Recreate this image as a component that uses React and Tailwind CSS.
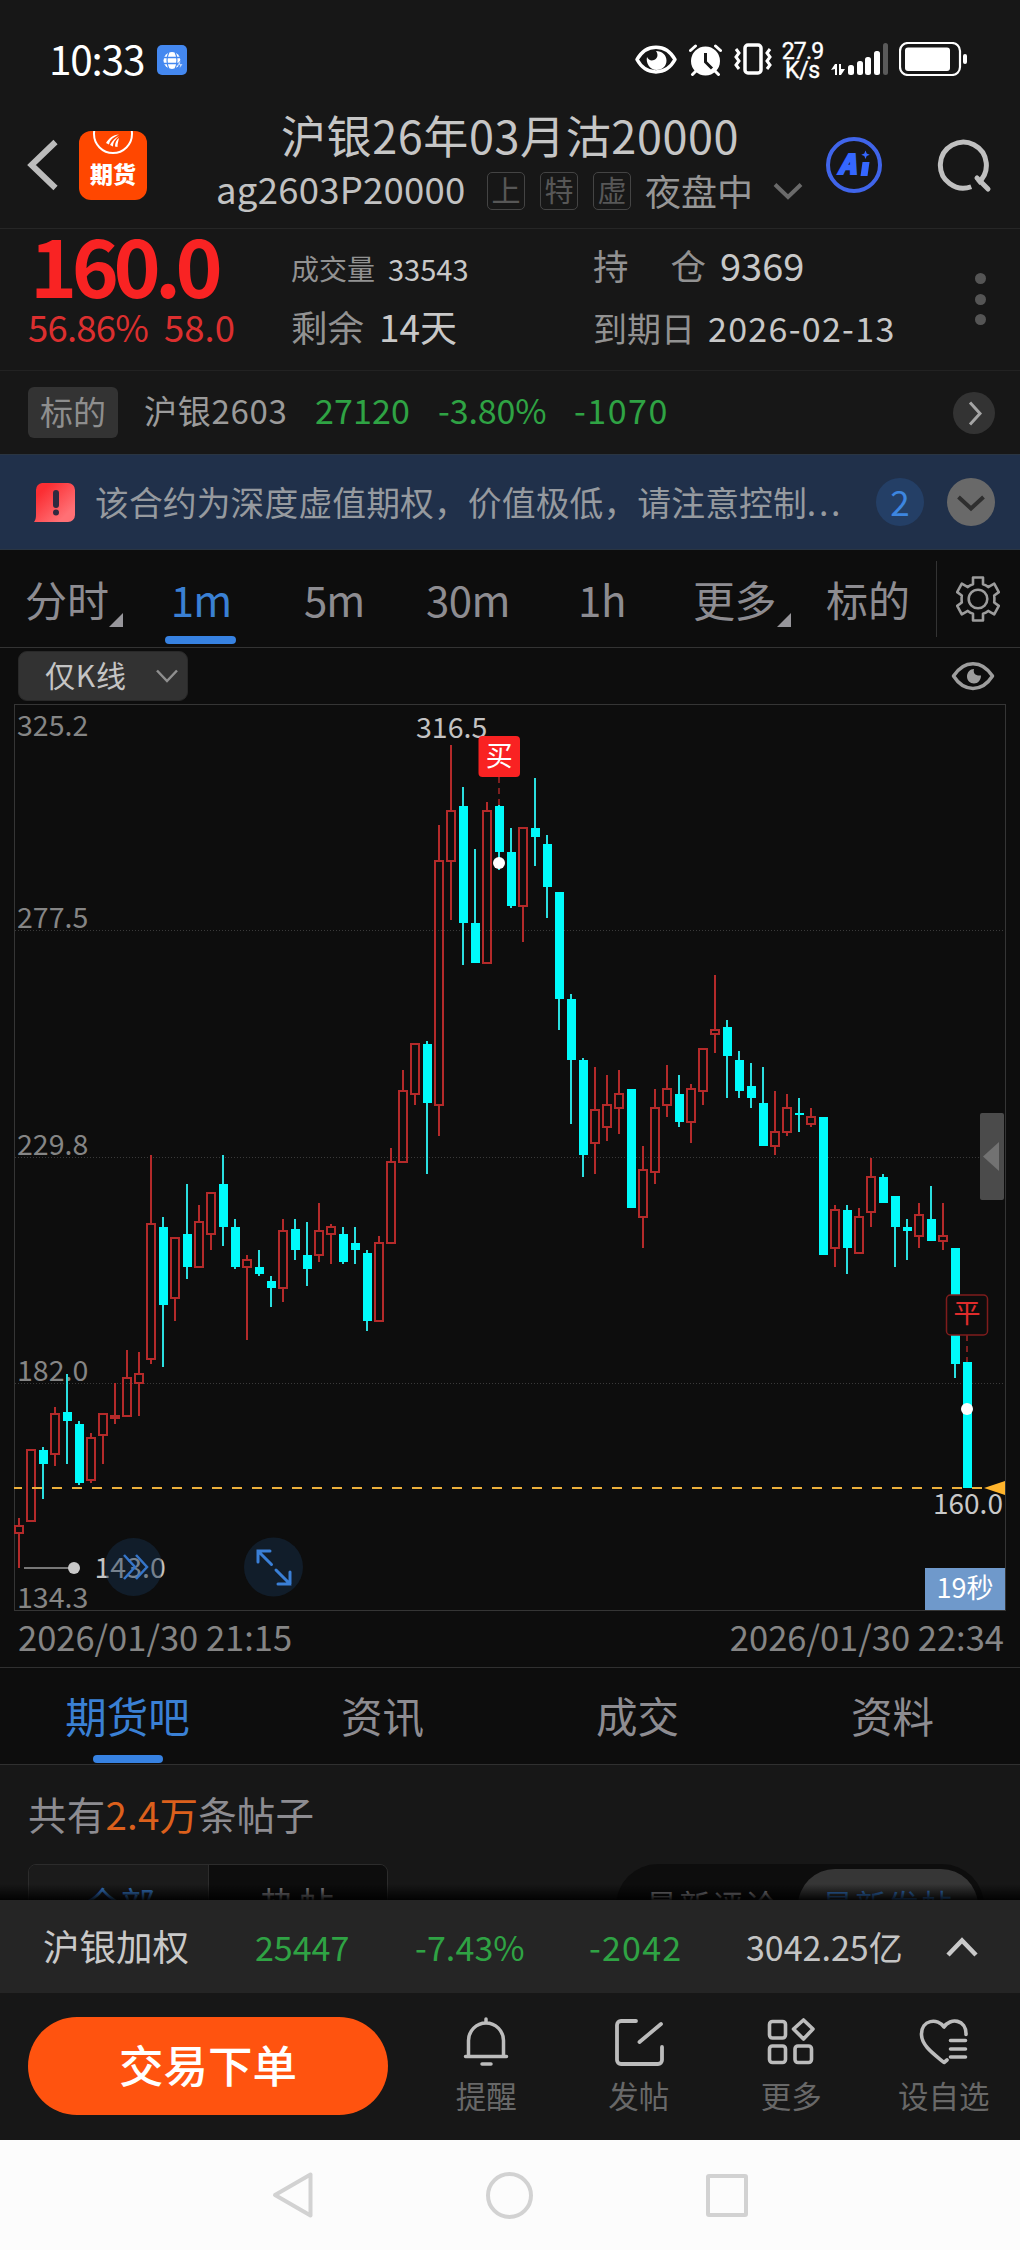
// one entry per minute: [direction, high, body top, body bottom, low] in chart px
const CANDLES = [
  ['up', 814, 821, 830, 864], ['up', 745, 745, 818, 818], ['down', 743, 746, 760, 795], ['up', 703, 709, 751, 762],
  ['down', 670, 708, 717, 760], ['down', 717, 720, 779, 781], ['up', 729, 733, 777, 779], ['up', 709, 709, 732, 760],
  ['up', 679, 711, 715, 720], ['up', 646, 673, 713, 713], ['up', 648, 669, 680, 712], ['up', 451, 519, 656, 660],
  ['down', 513, 523, 601, 663], ['up', 533, 533, 595, 617], ['down', 480, 530, 563, 575], ['up', 501, 517, 564, 564],
  ['up', 488, 488, 531, 546], ['down', 451, 480, 523, 542], ['down', 515, 523, 563, 565], ['up', 551, 555, 564, 636],
  ['down', 546, 563, 570, 572], ['down', 572, 577, 584, 603], ['up', 515, 526, 585, 598], ['down', 515, 525, 546, 556],
  ['down', 518, 551, 565, 582], ['up', 499, 526, 552, 558], ['up', 520, 522, 531, 560], ['down', 523, 530, 558, 560],
  ['down', 523, 539, 546, 560], ['down', 546, 549, 617, 627], ['up', 532, 538, 618, 618], ['up', 444, 457, 540, 540],
  ['up', 366, 386, 459, 459], ['up', 339, 339, 391, 401], ['down', 337, 340, 399, 470], ['up', 121, 156, 402, 432],
  ['up', 41, 106, 158, 216], ['down', 83, 102, 219, 261], ['down', 145, 219, 259, 259], ['up', 98, 106, 260, 260],
  ['down', 100, 102, 148, 166], ['down', 124, 148, 202, 204], ['up', 123, 123, 203, 238], ['down', 74, 124, 133, 162],
  ['down', 131, 140, 183, 214], ['down', 188, 188, 295, 326], ['down', 290, 295, 356, 420], ['down', 354, 356, 451, 473],
  ['up', 363, 405, 440, 470], ['up', 371, 400, 424, 437], ['up', 366, 389, 405, 430], ['down', 385, 385, 504, 504],
  ['up', 442, 465, 514, 544], ['up', 385, 403, 469, 480], ['up', 361, 384, 402, 413], ['down', 371, 390, 418, 423],
  ['up', 380, 384, 419, 439], ['up', 344, 344, 388, 401], ['up', 271, 325, 331, 349], ['down', 316, 323, 352, 394],
  ['down', 347, 356, 387, 394], ['down', 359, 382, 394, 404], ['down', 363, 399, 442, 442], ['up', 387, 427, 443, 451],
  ['up', 390, 403, 429, 432], ['down', 394, 409, 411, 428], ['up', 404, 412, 421, 423], ['down', 413, 413, 551, 551],
  ['up', 501, 505, 545, 563], ['down', 501, 506, 544, 570], ['up', 504, 512, 550, 550], ['up', 454, 472, 509, 523],
  ['down', 470, 473, 499, 499], ['down', 492, 492, 523, 563], ['down', 515, 523, 527, 556], ['up', 499, 510, 533, 544],
  ['down', 482, 515, 537, 537], ['up', 499, 531, 538, 546], ['down', 544, 544, 660, 674], ['down', 658, 658, 784, 784],
]

const GRID_LINES = [226.5, 453.5, 679.5]

const AXIS_LABELS = [
  { value: '325.2', y: 32 },
  { value: '277.5', y: 224 },
  { value: '229.8', y: 451 },
  { value: '182.0', y: 677 },
  { value: '134.3', y: 903.5 },
]

const SUB_TABS = ['期货吧', '资讯', '成交', '资料']

function Candle({ index, data }) {
  const [dir, high, top, bottom, low] = data
  const x = 19 + index * 12
  if (dir === 'down') {
    return (
      <g fill="#00fbfb">
        <rect x={x - 1} y={high} width="2" height={low - high} fill="#2adfe0" />
        <rect x={x - 4} y={top} width="9" height={Math.max(bottom - top, 1)} />
      </g>
    )
  }
  return (
    <g fill="#b42a2a">
      <rect x={x - 1} y={high} width="2" height={top - high} />
      <rect x={x - 1} y={bottom} width="2" height={low - bottom} />
      <rect x={x - 4} y={top + 1} width="8" height={Math.max(bottom - top - 2, 1)} fill="none" stroke="#b42a2a" strokeWidth="2" />
    </g>
  )
}

function Chart() {
  return (
    <svg className="block w-[1020px] h-[907px] overflow-visible" viewBox="0 0 1020 907" fontSize="28.5">
      <rect x="14.5" y="0.5" width="991" height="906" fill="none" stroke="#353535" />
      {GRID_LINES.map((y) => (
        <line key={y} x1="15" x2="1005" y1={y} y2={y} stroke="#3a3a3a" strokeDasharray="1 2" />
      ))}
      {AXIS_LABELS.map((label) => (
        <text key={label.value} x="17" y={label.y} fill="#858585">{label.value}</text>
      ))}

      {CANDLES.map((data, i) => <Candle key={i} index={i} data={data} />)}

      {/* last price */}
      <path d="M12 784H984" stroke="#edb03c" strokeWidth="2" strokeDasharray="10 10" />
      <path d="M12 784h2" stroke="#0d0d0d" strokeWidth="2" />
      <path d="M984 784l21-7v14z" fill="#ffb42c" />
      <rect x="963" y="760" width="9" height="24" fill="#00fbfb" />
      <text x="933" y="810" fill="#c9c9c9" fontSize="28">160.0</text>

      {/* high / low callouts */}
      <text x="416" y="33.5" fill="#c3c3c3">316.5</text>
      <path d="M24 864h48" stroke="#777" strokeWidth="2" />
      <circle cx="74" cy="864" r="6" fill="#c8c8c8" />
      <text x="94.5" y="874" fill="#c3c3c3">143.0</text>

      {/* buy marker */}
      <path d="M499 73v29" stroke="#7d1f1f" strokeWidth="2" strokeDasharray="6 5" />
      <rect x="478.5" y="32" width="41.5" height="41" rx="4" fill="#f92222" />
      <text x="499.3" y="61.5" fill="#fff" textAnchor="middle" fontSize="27">买</text>
      <circle cx="499" cy="159" r="6" fill="#fff" />

      {/* close marker */}
      <path d="M967 631v27" stroke="#7d1f1f" strokeWidth="2" strokeDasharray="6 5" />
      <rect x="946.5" y="591" width="41" height="40" rx="4" fill="#0d0d0d" stroke="#7f1c1c" strokeWidth="1.5" />
      <text x="967" y="619" fill="#e02c2c" textAnchor="middle" fontSize="27">平</text>
      <circle cx="967" cy="705" r="6" fill="#fff" />

      {/* side handle */}
      <rect x="980" y="409" width="24" height="87" rx="2" fill="#4b4b4b" />
      <path d="M983 452.5l16-14.5v29z" fill="#727272" />

      {/* floating buttons */}
      <circle cx="133.5" cy="863" r="29" fill="#17304d" fillOpacity="0.45" />
      <path d="M124 851l11 12-11 12M136 851l11 12-11 12" fill="none" stroke="#3575c9" strokeWidth="2.5" />
      <circle cx="273.5" cy="863" r="29.5" fill="#17304d" fillOpacity="0.45" />
      <path
        d="M258 858v-11h12M258.500 847.500l13 13M276 866l14 14M278 880h12v-12"
        fill="none" stroke="#3a7fd6" strokeWidth="3" strokeLinecap="round"
      />

      <rect x="925" y="864" width="80" height="42" fill="#6f99cb" />
      <text x="965" y="894" fill="#fff" textAnchor="middle" fontSize="27">19秒</text>
    </svg>
  )
}

function EyeIcon({ className }) {
  return (
    <svg className={className} viewBox="0 0 44 30" fill="none">
      <path d="M2.500 15C13-1.500 31-1.500 41.500 15 31 31.500 13 31.500 2.500 15z" stroke="currentColor" strokeWidth="3.5" strokeLinejoin="round" />
      <path d="M23 8c-1 4 1 7 7 6.500 0 4.500-3 8-7 8s-7-3-7-7 3-7.500 7-7.500z" fill="currentColor" />
    </svg>
  )
}

function StatusBar() {
  return (
    <div className="flex h-[104px] items-start text-white">
      <span className="ml-[49px] mt-[38px] w-[108px] text-[40.5px] leading-none tracking-[-1.2px]">10:33</span>
      <svg className="mt-[45px] w-[30px] h-[30px]" viewBox="0 0 30 30" fill="none">
        <rect width="30" height="30" rx="5" fill="#4488f0" />
        <circle cx="15" cy="15.5" r="8.5" fill="#fff" />
        <path d="M6 12.500h18M6 18.500h18M12 7c-2.500 5-2.500 12 0 17M18 7c2.500 5 2.500 12 0 17" stroke="#4488f0" strokeWidth="1.3" />
        <path d="M24 15l-4 5h3l-1 4 4-5h-3z" fill="#fff" stroke="#4488f0" strokeWidth=".8" />
      </svg>
      <div className="ml-auto mr-[51px] mt-[42px] flex items-start">
        <svg className="mt-[3px] w-[42px] h-[29px]" viewBox="0 0 42 29" fill="none">
          <path d="M2 14.500C11-2 31-2 40 14.500 31 31 11 31 2 14.500z" stroke="#fff" strokeWidth="3.5" strokeLinejoin="round" />
          <path d="M21 6c3 4 1 8-2 9-3 1-5.500 0-7-3-1.500 6 3 13 9.500 13 6 0 10-4 10-9.500S27 6 21 6z" fill="#fff" />
        </svg>
        <svg className="ml-3 mt-[2px] w-[33px] h-[32px]" viewBox="0 0 33 32" fill="none" stroke="#fff" strokeLinecap="round">
          <circle cx="16.5" cy="17" r="14.5" fill="#fff" stroke="none" />
          <path d="M1.500 6.500L6.500 2M31.500 6.500L26.500 2M7 27l-3.500 3.500M26 27l3.500 3.500" strokeWidth="3" />
          <path d="M16.500 9v9l6.500 6.500" stroke="#171717" strokeWidth="3" strokeLinecap="butt" />
        </svg>
        <svg className="ml-3 mt-[1px] w-[38px] h-[32px]" viewBox="0 0 38 32" fill="none" stroke="#fff" strokeWidth="3.5">
          <rect x="11" y="2" width="16" height="28" rx="3" />
          <path d="M2 6l3 4-3 4 3 4-3 4 3 4M36 6l-3 4 3 4-3 4 3 4-3 4" strokeWidth="3" />
        </svg>
        <div className="ml-2 w-[45px] text-center font-['Roboto',sans-serif] text-[23px] leading-[19px] [-webkit-text-stroke:0.4px_#fff]">
          <div className="tracking-[-0.8px]">27.9</div>
          <div className="tracking-[-0.3px]">K/s</div>
        </div>
        <svg className="ml-[6px] w-[60px] h-[34px]" viewBox="0 0 60 34" fill="#fff">
          <path d="M0 28l4-6h2v11H4v-6zM14 27l-4 6H8V22h2v5z" />
          <rect x="17" y="23" width="6" height="10" rx="2.5" />
          <rect x="26" y="19" width="6" height="14" rx="2.5" />
          <rect x="34" y="15" width="6" height="18" rx="2.5" />
          <rect x="43" y="9" width="6" height="24" rx="2.5" />
          <rect x="52" y="1" width="5" height="32" rx="2.5" fill="#5a5a5a" />
        </svg>
        <svg className="ml-[8px] w-[70px] h-[34px]" viewBox="0 0 70 34" fill="none">
          <rect x="1" y="1" width="60" height="32" rx="8" stroke="#fff" strokeWidth="2.2" />
          <rect x="6" y="5.5" width="45" height="23.5" rx="3" fill="#fff" />
          <rect x="64" y="12" width="4" height="10" rx="2" fill="#fff" />
        </svg>
      </div>
    </div>
  )
}

function Badge({ children }) {
  return (
    <span className="mr-[15px] flex h-[38px] w-[38px] shrink-0 items-center justify-center rounded-[5px] border border-[#444] pb-[3px] text-[29px] leading-none text-[#575757]">
      {children}
    </span>
  )
}

function Header() {
  return (
    <div className="flex h-[125px] border-b border-[#262626]">
      <svg className="ml-[27px] mt-[35px] w-[32px] h-[52px]" viewBox="0 0 32 52" fill="none">
        <path d="M28.500 3L4.500 26l24 23" stroke="#bcbcbc" strokeWidth="6" />
      </svg>
      <div className="relative ml-[20px] mt-[27px] h-[69px] w-[68px] overflow-hidden rounded-[12px] bg-[#ff4700]">
        <svg className="absolute left-0 top-0 w-[68px] h-[26px]" viewBox="0 0 68 26" fill="none">
          <circle cx="34" cy="3" r="19" stroke="#fff" strokeWidth="2" />
          <path d="M27 12c3-5 7-8 13-8.500-6 3-9 5-10 10zM31 14c2-4 5-7 9-9-4 4-6 6-6 10.500zM36 15.500c0-4 1.500-6.500 4-8.500-.5 3-1.500 5-1.500 9z" fill="#fff" />
        </svg>
        <span className="absolute left-[11px] top-[31px] text-[23px] font-black leading-none text-white">期货</span>
      </div>
      <div className="ml-[69px] w-[600px]">
        <div className="ml-[65px] mt-[8px] text-[45px] leading-[45px] tracking-[0.6px] text-[#c6c6c6]">沪银26年03月沽20000</div>
        <div className="mt-[13px] flex h-[42px] items-center">
          <span className="w-[271px] shrink-0 pb-[3px] text-[36.5px] leading-none tracking-[0.25px] text-[#c2c2c2]">ag2603P20000</span>
          <Badge>上</Badge>
          <Badge>特</Badge>
          <Badge>虚</Badge>
          <span className="-ml-[1px] pb-[3px] text-[36px] leading-none text-[#969696]">夜盘中</span>
          <svg className="ml-[20px] w-[30px] h-[20px]" viewBox="0 0 30 20" fill="none">
            <path d="M2 3.500l13 12.500 13-12.500" stroke="#6a6a6a" strokeWidth="4" />
          </svg>
        </div>
      </div>
      <div className="ml-[10px] mt-[33px] flex h-[56px] items-center">
        <svg className="w-[56px] h-[56px]" viewBox="0 0 56 56" fill="none">
          <circle cx="28" cy="28" r="26" stroke="#4065ea" strokeWidth="4" />
          <text x="12" y="37" fill="#3567ff" stroke="#3567ff" strokeWidth="1.8" fontSize="27" fontWeight="900" fontStyle="italic">A</text>
          <path d="M36.500 25h7l-2 14h-7zM39.500 13.500l1.200 3 3 1.200-3 1.200-1.200 3-1.200-3-3-1.200 3-1.200z" fill="#3567ff" />
        </svg>
        <svg className="ml-[55px] w-[56px] h-[56px]" viewBox="0 0 56 56" fill="none" stroke="#c0c0c0" strokeWidth="5">
          <path d="M35 49.500A23 23 0 1 1 41.500 45.500" transform="rotate(2 27 28)" />
          <path d="M42 44l11 11" strokeLinecap="round" transform="translate(-2 -3)" />
        </svg>
      </div>
    </div>
  )
}

function QuotePanel() {
  return (
    <div className="flex h-[142px] border-b border-[#222]">
      <div className="ml-[30px] w-[261px] pt-[4px]">
        <div className="text-[80px] font-bold leading-[60px] tracking-[-5.5px] text-[#f92323]">160.0</div>
        <div className="mt-[15px] -ml-[2px] flex text-[36.5px] leading-[37px] text-[#dc2f2f]">
          <span className="w-[136px] tracking-[-0.8px]">56.86%</span>
          <span>58.0</span>
        </div>
      </div>
      <div className="w-[302px] text-[#c8c8c8]">
        <div className="mt-[25px] flex h-[29px] text-[29px] leading-[29px]">
          <span className="w-[97px] text-[28px] text-[#929292]">成交量</span>33543
        </div>
        <div className="mt-[25px] flex text-[37px] leading-[37px]">
          <span className="w-[88px] text-[36.5px] text-[#929292]">剩余</span>14天
        </div>
      </div>
      <div className="text-[#c8c8c8]">
        <div className="mt-[17px] flex text-[38px] leading-[38px]">
          <span className="mr-[14px] flex w-[113px] justify-between text-[35.5px] text-[#929292]"><span>持</span><span>仓</span></span>9369
        </div>
        <div className="mt-[27px] flex text-[34px] leading-[34px]">
          <span className="w-[115px] text-[#929292]">到期日</span>
          <span className="tracking-[1.3px]">2026-02-13</span>
        </div>
      </div>
      <div className="ml-auto mr-[34px] mt-[44px] flex flex-col gap-[9.5px]">
        <span className="h-[11px] w-[11px] rounded-full bg-[#555]" />
        <span className="h-[11px] w-[11px] rounded-full bg-[#555]" />
        <span className="h-[11px] w-[11px] rounded-full bg-[#555]" />
      </div>
    </div>
  )
}

function UnderlyingRow() {
  return (
    <div className="flex h-[83px] items-center text-[34px] leading-none text-[#2fa344]">
      <span className="ml-[28px] flex h-[51px] w-[90px] items-center justify-center rounded-[6px] bg-[#333] pb-[3px] text-[33px] text-[#8e8e8e]">标的</span>
      <span className="ml-[26px] w-[171px] pb-[5px] text-[33px] tracking-[0.7px] text-[#9b9b9b]">沪银2603</span>
      <span className="w-[123px] pb-[5px] tracking-[0.1px]">27120</span>
      <span className="w-[136px] pb-[5px] tracking-[-0.1px]">-3.80%</span>
      <span className="pb-[5px] tracking-[1.5px]">-1070</span>
      <svg className="ml-auto mr-[25px] w-[42px] h-[42px]" viewBox="0 0 42 42" fill="none">
        <circle cx="21" cy="21" r="21" fill="#333" />
        <path d="M17 10.500L27 21.500 17 32.500" stroke="#a5a5a5" strokeWidth="3" />
      </svg>
    </div>
  )
}

function NoticeBanner() {
  return (
    <div className="flex h-[96px] items-center border-y border-[#2a3542] bg-[#20304a]">
      <svg className="ml-[34px] w-[41px] h-[39px]" viewBox="0 0 41 39">
        <defs>
          <linearGradient id="alert" x1="0" y1="0" x2="1" y2="1">
            <stop offset="0.2" stopColor="#fb2e33" />
            <stop offset="0.8" stopColor="#ff7075" />
          </linearGradient>
        </defs>
        <path d="M8 0h26a7 7 0 0 1 7 7v25a7 7 0 0 1-7 7H0c1.500-2 2-4 2-7V7a7 7 0 0 1 6-7z" fill="url(#alert)" />
        <rect x="19" y="7" width="6" height="18" rx="3" fill="#302a40" />
        <circle cx="22" cy="29.5" r="3" fill="#302a40" />
      </svg>
      <span className="ml-[20px] whitespace-nowrap pb-[1px] text-[33.8px] leading-none tracking-[0.1px] text-[#969a9f]">
        该合约为深度虚值期权，价值极低，请注意控制<span className="tracking-[2.7px]">...</span>
      </span>
      <span className="ml-auto flex h-[48px] w-[48px] items-center justify-center rounded-full bg-[#243f66] pb-[3px] text-[35px] leading-none text-[#3d86e0]">2</span>
      <svg className="ml-[23px] mr-[25px] w-[48px] h-[48px]" viewBox="0 0 48 48" fill="none">
        <circle cx="24" cy="24" r="24" fill="#696969" />
        <path d="M11.500 19L24 30.500 36.500 19" stroke="#2e2e2e" strokeWidth="4" />
      </svg>
    </div>
  )
}

function Corner() {
  return (
    <svg className="mt-[43px] w-[14px] h-[14px]" viewBox="0 0 14 14">
      <path d="M14 0v14H0z" fill="#97969b" />
    </svg>
  )
}

function PeriodTabs() {
  return (
    <div className="flex h-[98px] items-center border-b border-[#333] text-[42px] leading-none text-[#8d8c91]">
      <span className="ml-[25px] w-[84px]">分时</span>
      <Corner />
      <span className="relative ml-[42px] flex h-full w-[71px] items-center justify-center text-[#3a80d4]">
        <span className="pl-[1px] tracking-[-0.8px]">1m</span>
        <span className="absolute bottom-[3px] left-0 h-[8px] w-[71px] rounded-full bg-[#3782e2]" />
      </span>
      <span className="ml-[68px] w-[122px] tracking-[-1px]">5m</span>
      <span className="w-[152px] tracking-[-0.5px]">30m</span>
      <span className="w-[115px] tracking-[-0.3px]">1h</span>
      <span className="w-[84px] tracking-[-0.5px]">更多</span>
      <Corner />
      <span className="ml-[35px] w-[110px]">标的</span>
      <span className="h-[76px] w-px bg-[#333]" />
      <svg className="ml-[19px] w-[44px] h-[46px]" viewBox="0 0 44 46" fill="none" stroke="#9c9c9c" strokeWidth="2.6" strokeLinejoin="round">
        <circle cx="22" cy="23" r="9.3" />
        <path d="M17 1.500h10v6.800q3 .9 5.200 2.800l6-3.400 4.600 8.400-4.600 3.400q.4 3.500 0 7l4.600 3.400-4.600 8.400-6-3.400q-2.200 1.900-5.200 2.800v6.800H17v-6.800q-3-.9-5.200-2.800l-6 3.400-4.600-8.400 4.600-3.400q-.4-3.500 0-7L1.200 16.100l4.600-8.400 6 3.400q2.200-1.900 5.200-2.800z" />
      </svg>
    </div>
  )
}

function ChartToolbar() {
  return (
    <div className="flex h-[56px] items-center">
      <div className="-mt-[1px] ml-[18px] flex h-[50px] w-[170px] items-center rounded-[9px] border border-[#292929] bg-[#323232]">
        <span className="ml-[26px] w-[111px] pb-[3px] text-[30px] leading-none tracking-[0.8px] text-[#c4c4c4]">仅K线</span>
        <svg className="w-[22px] h-[14px]" viewBox="0 0 22 14" fill="none">
          <path d="M1 1.500l10 10.500 10-10.500" stroke="#8f8f8f" strokeWidth="2.5" />
        </svg>
      </div>
      <EyeIcon className="ml-auto mr-[25px] w-[44px] h-[30px] text-[#9d9d9d]" />
    </div>
  )
}

function PostsSection() {
  return (
    <div className="relative h-[135px] overflow-hidden bg-[#171717]">
      <div className="ml-[28px] pt-[29px] text-[38.5px] leading-[39px] tracking-[0.2px] text-[#8d8c91]">
        共有<span className="text-[#dc601c]">2.4万</span>条帖子
      </div>
      <div className="mt-[31px] flex justify-between pl-[28px] pr-[36px] text-[35px] leading-none">
        <div className="flex h-[72px] w-[360px] overflow-hidden rounded-[8px] border border-[#2c2c2c]">
          <div className="w-[180px] border-r border-[#2c2c2c] bg-[#1b1b1b] pt-[20px] pl-[56px] text-[#3a80d4]">全部</div>
          <div className="flex-1 bg-[#0d0d0d] pl-[51px] pt-[20px] tracking-[4px] text-[#8d8c91]">热帖</div>
        </div>
        <div className="flex h-[84px] w-[368px] rounded-full bg-[#0d0d0d] p-[5px] pr-[6px] text-[31px]">
          <div className="w-[177px] whitespace-nowrap pl-[25px] pt-[19px] tracking-[2.2px] text-[#8d8c91]">最新评论</div>
          <div className="w-[180px] whitespace-nowrap rounded-full bg-[#363636] pl-[24px] pt-[19px] tracking-[2px] text-[#3a80d4]">最新发帖</div>
        </div>
      </div>
      <div className="absolute inset-x-0 bottom-0 h-[16px] bg-linear-to-b from-transparent to-black/90" />
    </div>
  )
}

function IndexBar() {
  return (
    <div className="flex h-[93px] items-center bg-[#252525] text-[34px] leading-none text-[#2fa344]">
      <span className="ml-[43px] w-[212px] text-[36.5px] text-[#c9c9c9]">沪银加权</span>
      <span className="w-[160px]">25447</span>
      <span className="w-[174px] tracking-[0.1px]">-7.43%</span>
      <span className="w-[157px] tracking-[1.2px]">-2042</span>
      <span className="text-[#c4c4c4]">3042.25亿</span>
      <svg className="ml-auto mr-[41px] w-[34px] h-[22px]" viewBox="0 0 34 22" fill="none">
        <path d="M3 19L17 4.500 31 19" stroke="#c9c9c9" strokeWidth="4.5" />
      </svg>
    </div>
  )
}

function BellIcon() {
  return (
    <svg className="w-[50px] h-[50px]" viewBox="0 0 50 50" fill="none" stroke="#bcbcbc" strokeWidth="3.5" strokeLinecap="round">
      <path d="M25 2v4M7.500 38V23.500a17.500 17.500 0 0 1 35 0V38M4.500 39.500h41M21 47h9" />
    </svg>
  )
}

function PostIcon() {
  return (
    <svg className="w-[50px] h-[50px]" viewBox="0 0 50 50" fill="none" stroke="#bcbcbc" strokeWidth="3.8" strokeLinecap="round">
      <path d="M22 4H7a4 4 0 0 0-4 4v35a4 4 0 0 0 4 4h37a4 4 0 0 0 4-4V30M25.500 25L47 7" />
    </svg>
  )
}

function MoreIcon() {
  return (
    <svg className="w-[50px] h-[50px]" viewBox="0 0 50 50" fill="none" stroke="#bcbcbc" strokeWidth="3.6">
      <rect x="3.5" y="4.5" width="16" height="16.5" rx="3" />
      <rect x="3.5" y="29" width="16" height="16.5" rx="3" />
      <rect x="29" y="29" width="16.5" height="16.5" rx="3" />
      <path d="M37.500 3l9.500 9-9.500 10-10-10z" strokeLinejoin="round" />
    </svg>
  )
}

function HeartIcon() {
  return (
    <svg className="w-[50px] h-[50px]" viewBox="0 0 50 50" fill="none" stroke="#bcbcbc" strokeWidth="3.6" strokeLinecap="round">
      <path d="M47 17.500C47.500 2 31 .500 25 10 19 .500 2 2.500 2.500 18 3 29 15 37 25 45.500l3-2.500M31.500 23.500h15M31.500 32h15M31.500 40h15" strokeLinejoin="round" />
    </svg>
  )
}

const ACTIONS = [
  { label: '提醒', icon: <BellIcon /> },
  { label: '发帖', icon: <PostIcon /> },
  { label: '更多', icon: <MoreIcon /> },
  { label: '设自选', icon: <HeartIcon /> },
]

function ActionBar() {
  return (
    <div className="flex h-[147px] bg-[#171717]">
      <button className="ml-[28px] mt-[24px] h-[98px] w-[360px] rounded-full bg-[#ff530f] pb-[4px] text-[44.5px] font-medium leading-none text-white">交易下单</button>
      <div className="ml-[22px] grid flex-1 grid-cols-4">
        {ACTIONS.map((action) => (
          <div key={action.label} className="flex flex-col items-center pt-[24px]">
            {action.icon}
            <span className="mt-[13px] text-[30.5px] leading-none text-[#686868]">{action.label}</span>
          </div>
        ))}
      </div>
    </div>
  )
}

function SystemNav() {
  return (
    <div className="flex h-[110px] items-center bg-[#fcfcfc]">
      <svg className="ml-[270px] w-[46px] h-[50px]" viewBox="0 0 46 50" fill="none">
        <path d="M40.500 4.500v41L5 25z" stroke="#d2d2d2" strokeWidth="4" strokeLinejoin="round" />
      </svg>
      <span className="ml-[170px] h-[47px] w-[47px] rounded-full border-4 border-[#d2d2d2]" />
      <span className="ml-[173px] h-[43px] w-[42px] rounded-[3px] border-4 border-[#d2d2d2]" />
    </div>
  )
}

export default function App() {
  return (
    <div className="w-[1020px] h-[2250px] overflow-hidden bg-[#0d0d0d] font-['Noto_Sans_CJK_SC',sans-serif]">
      <div className="bg-[#171717]">
        <StatusBar />
        <Header />
        <QuotePanel />
        <UnderlyingRow />
      </div>
      <NoticeBanner />
      <PeriodTabs />
      <ChartToolbar />
      <Chart />
      <div className="flex h-[56px] items-center justify-between pb-[6px] pl-[18px] pr-[16px] text-[34.5px] leading-none text-[#858585]">
        <span>2026/01/30 21:15</span>
        <span>2026/01/30 22:34</span>
      </div>
      <div className="grid h-[98px] grid-cols-4 border-y border-[#303030] text-[41.5px] leading-none text-[#8d8c91]">
        {SUB_TABS.map((tab, i) => (
          <div key={tab} className={`relative flex items-center justify-center ${i === 0 ? 'text-[#3a80d4]' : ''}`}>
            {tab}
            {i === 0 && <span className="absolute bottom-[1px] left-[93px] h-[8px] w-[70px] rounded-full bg-[#3782e2]" />}
          </div>
        ))}
      </div>
      <PostsSection />
      <IndexBar />
      <ActionBar />
      <SystemNav />
    </div>
  )
}
